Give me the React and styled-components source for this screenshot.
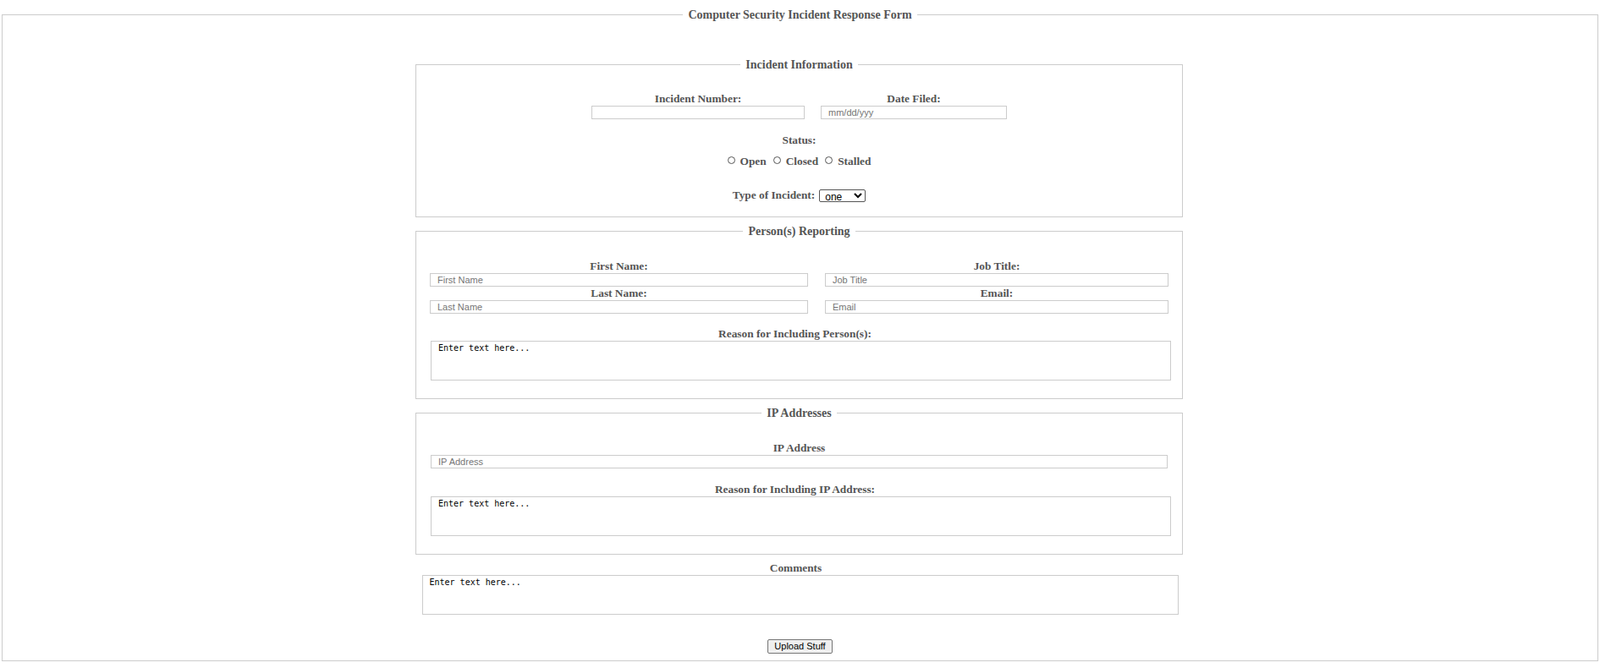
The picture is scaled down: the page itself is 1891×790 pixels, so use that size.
import React from "react";
import styled, { createGlobalStyle } from "styled-components";

const GlobalStyle = createGlobalStyle`
  html, body { margin: 0; padding: 0; background: #fff; }
  body { font-family: "Liberation Serif", "Times New Roman", serif; }
`;

const Form = styled.form`
  margin: 0;
`;

const Frame = styled.fieldset`
  margin: 9px 2px 0;
  padding: 43px 0 8px;
  border: 1px solid #ccc;
  min-width: 0;
`;

const Legend = styled.legend`
  margin: 0 auto;
  padding: 2px 6px 0;
  font-family: "Liberation Serif", "Times New Roman", serif;
  font-size: 14px;
  font-weight: bold;
  line-height: 14px;
  color: #555;
`;

const Content = styled.div`
  display: flex;
  flex-direction: column;
  align-items: center;
`;

const Section = styled.fieldset`
  box-sizing: border-box;
  width: 907px;
  margin: 0 2px 8px 0;
  padding: ${(p) => p.$pt}px 16px ${(p) => p.$pb}px;
  border: 1px solid #ccc;
  min-width: 0;
`;

const Label = styled.label`
  display: block;
  margin-top: ${(p) => p.$mt || 0}px;
  padding-right: ${(p) => (p.$shift ? 10 : 0)}px;
  font-size: 13.33px;
  font-weight: bold;
  line-height: 16px;
  color: #555;
  text-align: center;
`;

const FieldRow = styled.div`
  display: flex;
  justify-content: center;
  gap: 19px;
`;

const Field = styled.div`
  display: flex;
  flex-direction: column;
`;

const PersonGrid = styled.div`
  display: grid;
  grid-template-columns: 447px 406px;
  column-gap: 20px;
`;

const TextInput = styled.input`
  box-sizing: border-box;
  display: block;
  width: ${(p) => p.$w || "100%"};
  height: 16px;
  margin: 0 0 0 ${(p) => p.$ml || 0}px;
  padding: 0 8px;
  border: 1px solid #ccc;
  border-radius: 0;
  font-family: "Liberation Sans", Arial, sans-serif;
  font-size: 11px;
  color: #333;
  background: #fff;
  outline: none;
  &::placeholder {
    color: #757575;
  }
`;

const TextArea = styled.textarea`
  display: block;
  box-sizing: border-box;
  width: ${(p) => p.$w}px;
  height: 47px;
  margin: 0 0 0 ${(p) => p.$ml || 0}px;
  padding: 2px 8px;
  border: 1px solid #ccc;
  border-radius: 0;
  font-family: "DejaVu Sans Mono", "Liberation Mono", monospace;
  font-size: 10px;
  line-height: 12px;
  color: #000;
  background: #fff;
  resize: none;
  outline: none;
  overflow: hidden;
`;

const RadioRow = styled.div`
  display: flex;
  justify-content: center;
  align-items: center;
  gap: 8px;
  height: 16px;
  margin-top: 9px;
`;

const RadioOption = styled.label`
  display: inline-flex;
  align-items: center;
  gap: 6px;
  font-size: 13.33px;
  font-weight: bold;
  line-height: 16px;
  color: #555;
`;

const Radio = styled.input.attrs({ type: "radio" })`
  appearance: none;
  box-sizing: border-box;
  width: 9px;
  height: 9px;
  margin: 0 0 3px;
  border: 1px solid #555;
  border-radius: 50%;
  background: #fff;
`;

const TypeRow = styled.div`
  display: flex;
  justify-content: center;
  align-items: center;
  gap: 5px;
  height: 16px;
  margin-top: 24px;
  font-size: 13.33px;
  font-weight: bold;
  line-height: 16px;
  color: #555;
`;

const Select = styled.select`
  box-sizing: border-box;
  width: 55px;
  height: 15px;
  padding: 0 0 0 2px;
  font-family: "Liberation Sans", Arial, sans-serif;
  font-size: 12px;
  color: #000;
  border: 1px solid #555;
  border-radius: 2px;
  background: #fff;
`;

const UploadButton = styled.button`
  box-sizing: border-box;
  height: 17px;
  margin-top: 29px;
  padding: 0 7px;
  font-family: "Liberation Sans", Arial, sans-serif;
  font-size: 11px;
  line-height: 13px;
  color: #000;
  background: #efefef;
  border: 1px solid #767676;
  border-radius: 2px;
`;

export default function App() {
  return (
    <>
      <GlobalStyle />
      <Form onSubmit={(e) => e.preventDefault()}>
        <Frame>
          <Legend>Computer Security Incident Response Form</Legend>
          <Content>
            <Section $pt={25} $pb={17}>
              <Legend>Incident Information</Legend>
              <FieldRow>
                <Field>
                  <Label>Incident Number:</Label>
                  <TextInput $w="252px" />
                </Field>
                <Field>
                  <Label>Date Filed:</Label>
                  <TextInput $w="220px" placeholder="mm/dd/yyy" />
                </Field>
              </FieldRow>
              <Label $mt={17}>Status:</Label>
              <RadioRow>
                <RadioOption>
                  <Radio name="status" value="open" />
                  Open
                </RadioOption>
                <RadioOption>
                  <Radio name="status" value="closed" />
                  Closed
                </RadioOption>
                <RadioOption>
                  <Radio name="status" value="stalled" />
                  Stalled
                </RadioOption>
              </RadioRow>
              <TypeRow>
                <span>Type of Incident:</span>
                <Select defaultValue="one">
                  <option value="one">one</option>
                  <option value="two">two</option>
                  <option value="three">three</option>
                </Select>
              </TypeRow>
            </Section>

            <Section $pt={26} $pb={21}>
              <Legend>Person(s) Reporting</Legend>
              <PersonGrid>
                <Field>
                  <Label>First Name:</Label>
                  <TextInput placeholder="First Name" />
                </Field>
                <Field>
                  <Label>Job Title:</Label>
                  <TextInput placeholder="Job Title" />
                </Field>
                <Field>
                  <Label>Last Name:</Label>
                  <TextInput placeholder="Last Name" />
                </Field>
                <Field>
                  <Label>Email:</Label>
                  <TextInput placeholder="Email" />
                </Field>
              </PersonGrid>
              <Label $mt={16} $shift>
                Reason for Including Person(s):
              </Label>
              <TextArea $w={875} $ml={1} defaultValue="Enter text here..." />
            </Section>

            <Section $pt={26} $pb={21}>
              <Legend>IP Addresses</Legend>
              <Label>IP Address</Label>
              <TextInput $w="871px" $ml={1} placeholder="IP Address" />
              <Label $mt={17} $shift>
                Reason for Including IP Address:
              </Label>
              <TextArea $w={875} $ml={1} defaultValue="Enter text here..." />
            </Section>

            <Label $shift>Comments</Label>
            <TextArea $w={894} defaultValue="Enter text here..." />
            <UploadButton type="button">Upload Stuff</UploadButton>
          </Content>
        </Frame>
      </Form>
    </>
  );
}
